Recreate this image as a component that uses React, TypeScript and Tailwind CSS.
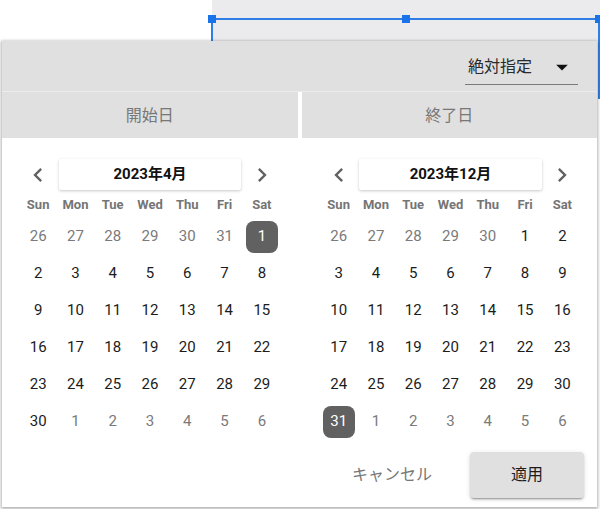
import { useState } from "react";

type Cell = { day: number; inMonth: boolean };

const WEEKDAYS = ["Sun", "Mon", "Tue", "Wed", "Thu", "Fri", "Sat"];

// build a 6-row month grid
function buildMonth(year: number, month: number): Cell[] {
  const first = new Date(year, month, 1).getDay();
  const daysIn = new Date(year, month + 1, 0).getDate();
  const prevDays = new Date(year, month, 0).getDate();
  const cells: Cell[] = [];
  for (let i = first - 1; i >= 0; i--) cells.push({ day: prevDays - i, inMonth: false });
  for (let d = 1; d <= daysIn; d++) cells.push({ day: d, inMonth: true });
  let next = 1;
  while (cells.length < 42) cells.push({ day: next++, inMonth: false });
  return cells;
}

const Chevron = ({ dir }: { dir: "left" | "right" }) => (
  <svg width="28" height="28" viewBox="0 0 24 24" fill="#616161">
    {dir === "left" ? (
      <path d="M15.41 7.41 14 6l-6 6 6 6 1.41-1.41L10.83 12z" />
    ) : (
      <path d="M8.59 16.59 10 18l6-6-6-6-1.41 1.41L13.17 12z" />
    )}
  </svg>
);

const Calendar = ({
  year,
  month,
  selected,
}: {
  year: number;
  month: number;
  selected: number;
}) => {
  const cells = buildMonth(year, month);
  return (
    <div className="w-[261px]">
      <div className="grid h-[31px] grid-cols-7 items-center">
        <button className="flex items-center justify-center">
          <Chevron dir="left" />
        </button>
        <div className="col-span-5 mx-[2px] flex h-[31px] items-center justify-center rounded-[2px] bg-white text-[15px] font-bold text-[#111] shadow-[0_1px_3px_rgba(0,0,0,0.22)]">
          {year}年{month + 1}月
        </div>
        <button className="flex items-center justify-center">
          <Chevron dir="right" />
        </button>
      </div>
      <div className="mt-[3px] grid h-[24px] grid-cols-7 items-center">
        {WEEKDAYS.map((w) => (
          <div key={w} className="text-center text-[13px] font-bold text-[#757575]">
            {w}
          </div>
        ))}
      </div>
      <div className="grid grid-cols-7 pt-[1px]">
        {cells.map((c, i) => {
          const isSel = c.inMonth && c.day === selected;
          return (
            <div key={i} className="flex h-[37px] items-center justify-center">
              <div
                className={
                  isSel
                    ? "flex h-[32px] w-[32px] items-center justify-center rounded-[8px] bg-[#616161] text-[15px] text-white"
                    : c.inMonth
                      ? "text-[15px] text-[#1c1c1c]"
                      : "text-[15px] text-[#7a7a7a]"
                }
              >
                {c.day}
              </div>
            </div>
          );
        })}
      </div>
    </div>
  );
};

export default function App() {
  const [mode] = useState("絶対指定");

  return (
    <div
      className="relative h-[509px] w-[600px] overflow-hidden bg-white"
      style={{ fontFamily: 'Roboto, "Noto Sans CJK JP", sans-serif' }}
    >
      {/* page behind the popover */}
      <div className="absolute left-[212px] right-0 top-0 h-[41px] bg-[#ebebed]" />
      <div className="absolute left-[212px] right-0 top-[18px] h-[2px] bg-[#2f7ee6]" />
      <div className="absolute left-[211px] top-[19px] h-[40px] w-[2px] bg-[#2f7ee6]" />
      <div className="absolute right-0 top-[19px] h-[80px] w-[2px] bg-[#2f7ee6]" />
      <div className="absolute left-[208px] top-[15px] h-[8px] w-[8px] bg-[#1a73e8]" />
      <div className="absolute left-[402px] top-[15px] h-[8px] w-[8px] bg-[#1a73e8]" />
      <div className="absolute left-[595px] top-[15px] h-[8px] w-[8px] bg-[#1a73e8]" />

      {/* popover */}
      <div className="absolute left-[2px] top-[41px] flex h-[466px] w-[595px] flex-col bg-white shadow-[0_1px_3px_1px_rgba(0,0,0,0.3)]">
        <div className="flex h-[50px] items-center justify-end bg-[#e0e0e0] pr-[19px]">
          <div className="mt-[2px] flex h-[36px] w-[113px] items-center border-b border-[#7a7a7a] pl-[3px]">
            <span className="flex-1 text-[16px] text-[#2a2a2a]">{mode}</span>
            <svg width="28" height="28" viewBox="0 0 24 24" fill="#111" className="mr-[2px]">
              <path d="M7 10l5 5 5-5z" />
            </svg>
          </div>
        </div>
        <div className="h-[1px] bg-[#ececec]" />
        <div className="grid h-[46px] grid-cols-2 gap-[4px]">
          <div className="flex items-center justify-center bg-[#e0e0e0] pt-[2px] text-[16px] text-[#777]">開始日</div>
          <div className="flex items-center justify-center bg-[#e0e0e0] pt-[2px] text-[16px] text-[#777]">終了日</div>
        </div>

        <div className="flex pt-[21px]">
          <div className="flex w-[296px] justify-center">
            <Calendar year={2023} month={3} selected={1} />
          </div>
          <div className="flex flex-1 justify-center pl-[6px]">
            <Calendar year={2023} month={11} selected={31} />
          </div>
        </div>

        <div className="mt-[12px] flex justify-end gap-[21px] pr-[13px]">
          <button className="h-[46px] w-[114px] text-[16px] text-[#777]">キャンセル</button>
          <button className="h-[46px] w-[114px] rounded-[4px] bg-[#e0e0e0] text-[16px] text-[#1c1c1c] shadow-[0_3px_1px_-2px_rgba(0,0,0,0.2),0_2px_2px_0_rgba(0,0,0,0.14),0_1px_5px_0_rgba(0,0,0,0.12)]">
            適用
          </button>
        </div>
      </div>
    </div>
  );
}
